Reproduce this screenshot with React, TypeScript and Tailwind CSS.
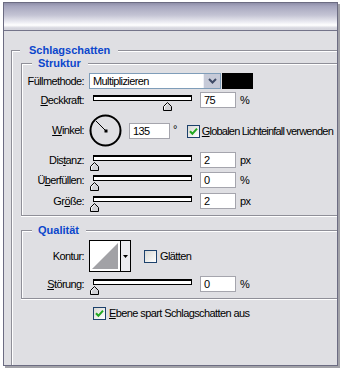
import React from "react";

const TXT = "font-['Liberation_Sans',Arial,sans-serif] text-[11px] tracking-[-0.6px] text-black";

function Check({ checked }: { checked: boolean }) {
  return (
    <div className="w-[13px] h-[13px] shrink-0 border border-[#1c416c] bg-[linear-gradient(135deg,#d8d8d4,#ffffff)] flex items-center justify-center">
      {checked && (
        <svg width="9" height="9" viewBox="0 0 9 9">
          <path d="M1 4.2 L3.4 6.8 L8 1.6" fill="none" stroke="#21a821" strokeWidth="2" />
        </svg>
      )}
    </div>
  );
}

function NumField({ value, w = "w-[36px]" }: { value: string; w?: string }) {
  return (
    <div className={`${w} h-[16px] shrink-0 border border-[#a5a5ad] bg-white pl-[3px] flex items-center ${TXT}`}>
      {value}
    </div>
  );
}

function Slider({ value }: { value: number }) {
  return (
    <div className="relative w-[111px] h-[16px] shrink-0">
      <div className="ml-[4px] mt-[6px] w-[99px] h-[6px] border border-t-2 border-black bg-white" />
      <svg
        className="absolute top-[7px]"
        style={{ left: Math.round(1 + value * 97) }}
        width="10"
        height="9"
        viewBox="0 0 10 9"
      >
        <path d="M4.5 0.5 L8.5 4.5 L8.5 8.5 L0.5 8.5 L0.5 4.5 Z" fill="#d2d2d6" stroke="#000" />
        <path d="M4.5 1.8 L1.5 4.8 L1.5 7.5" fill="none" stroke="#fff" />
      </svg>
    </div>
  );
}

function Label({ children }: { children: React.ReactNode }) {
  return <div className={`w-[62px] shrink-0 text-right ${TXT}`}>{children}</div>;
}

function Legend({ children, className }: { children: React.ReactNode; className: string }) {
  return (
    <div
      className={`absolute top-[-8px] bg-[#dfdfe3] font-['Liberation_Sans',Arial,sans-serif] text-[11px] font-bold leading-[14px] text-[#0b46cc] ${className}`}
    >
      {children}
    </div>
  );
}

export default function App() {
  return (
    <div className="w-[341px] h-[368px] bg-white overflow-hidden pt-[2px] pl-[3px]">
      <div className="w-[335px] h-[364px] border border-[#6c6c82] shadow-[2px_2px_0_#a2a2a8] flex flex-col">
        {/* title band */}
        <div className="h-[28px] shrink-0 border-b border-[#74748a] bg-[linear-gradient(to_bottom,#8e8ea8_0%,#a6a6be_12%,#c4c4d4_45%,#eeeef4_72%,#ffffff_82%,#d8d8e0_92%,#d4d4dc_100%)]" />

        <div className="flex-1 bg-[#dfdfe3] overflow-hidden">
          {/* Schlagschatten */}
          <div className="relative ml-[7px] mt-[19px] w-[340px] h-[330px] border-l border-t border-[#8f8f98] shadow-[inset_1px_1px_0_#fff]">
            <Legend className="left-[8px] pl-[9px] pr-[8px]">Schlagschatten</Legend>

            {/* Struktur */}
            <div className="relative ml-[9px] mt-[12px] w-[330px] border-l border-t border-b border-[#8f8f98] shadow-[inset_1px_1px_0_#fff,0_1px_0_#fff] pb-[6px]">
              <Legend className="left-[10px] pl-[6px] pr-[7px]">Struktur</Legend>

              <div className="mt-[9px] h-[16px] flex items-center">
                <Label>Füllmethode:</Label>
                <div className="ml-[5px] w-[132px] h-[16px] border border-[#7f9db9] bg-white flex">
                  <div className={`flex-1 pl-[3px] flex items-center ${TXT}`}>Multiplizieren</div>
                  <div className="w-[17px] h-full bg-[#c6cad8] border-l border-[#eef0f6] flex items-center justify-center">
                    <svg width="9" height="6" viewBox="0 0 9 6">
                      <path d="M1 1 L4.5 4.5 L8 1" fill="none" stroke="#3e4a66" strokeWidth="2" />
                    </svg>
                  </div>
                </div>
                <div className="ml-[1px] w-[31px] h-[16px] bg-black" />
              </div>

              <div className="mt-[3px] h-[16px] flex items-center">
                <Label>
                  <u>D</u>eckkraft:
                </Label>
                <div className="ml-[5px]">
                  <Slider value={0.75} />
                </div>
                <NumField value="75" />
                <span className={`ml-[4px] ${TXT}`}>%</span>
              </div>

              <div className="mt-[6px] h-[32px] flex items-center">
                <Label>
                  <u>W</u>inkel:
                </Label>
                <svg className="ml-[5px] shrink-0" width="33" height="33" viewBox="0 0 33 33">
                  <circle cx="16.5" cy="16.5" r="15" fill="none" stroke="#000" strokeWidth="2" />
                  <path d="M7 7 L16.5 16.5" stroke="#000" strokeWidth="1" />
                  <rect x="15.5" y="15.5" width="3" height="3" fill="#000" />
                </svg>
                <div className="ml-[7px] mt-[2px]">
                  <NumField value="135" w="w-[41px]" />
                </div>
                <span className={`ml-[3px] self-start mt-[7px] text-[9px] ${TXT}`}>°</span>
                <div className="ml-[10px] mt-[2px]">
                  <Check checked />
                </div>
                <span className="ml-[2px] mt-[2px] whitespace-nowrap font-['Liberation_Sans',Arial,sans-serif] text-[11px] tracking-[-0.8px] text-black">
                  <u>G</u>lobalen Lichteinfall verwenden
                </span>
              </div>

              <div className="mt-[6px] h-[16px] flex items-center">
                <Label>
                  Dis<u>t</u>anz:
                </Label>
                <div className="ml-[5px]">
                  <Slider value={0} />
                </div>
                <NumField value="2" />
                <span className={`ml-[4px] ${TXT}`}>px</span>
              </div>

              <div className="mt-[4px] h-[16px] flex items-center">
                <Label>
                  Ü<u>b</u>erfüllen:
                </Label>
                <div className="ml-[5px]">
                  <Slider value={0} />
                </div>
                <NumField value="0" />
                <span className={`ml-[4px] ${TXT}`}>%</span>
              </div>

              <div className="mt-[5px] h-[16px] flex items-center">
                <Label>
                  Gr<u>ö</u>ße:
                </Label>
                <div className="ml-[5px]">
                  <Slider value={0} />
                </div>
                <NumField value="2" />
                <span className={`ml-[4px] ${TXT}`}>px</span>
              </div>
            </div>

            {/* Qualität */}
            <div className="relative ml-[9px] mt-[14px] w-[330px] border-l border-t border-b border-[#8f8f98] shadow-[inset_1px_1px_0_#fff,0_1px_0_#fff] pb-[6px]">
              <Legend className="left-[10px] pl-[6px] pr-[7px]">Qualität</Legend>

              <div className="mt-[9px] h-[32px] flex items-center">
                <Label>Kontur:</Label>
                <div className="ml-[5px] w-[42px] h-[32px] border border-black bg-white flex">
                  <div className="w-[31px] h-full border-r border-black p-[2px]">
                    <svg width="26" height="26" viewBox="0 0 26 26" className="block">
                      <rect width="26" height="26" fill="#fff" />
                      <path d="M0 26 L26 0 L26 26 Z" fill="#a2a2a6" />
                    </svg>
                  </div>
                  <div className="flex-1 bg-[#ececf0] flex items-center justify-center">
                    <svg width="5" height="3" viewBox="0 0 5 3">
                      <path d="M0 0 L5 0 L2.5 3 Z" fill="#000" />
                    </svg>
                  </div>
                </div>
                <div className="ml-[13px]">
                  <Check checked={false} />
                </div>
                <span className={`ml-[3px] ${TXT}`}>Glätten</span>
              </div>

              <div className="mt-[4px] h-[16px] flex items-center">
                <Label>
                  <u>S</u>törung:
                </Label>
                <div className="ml-[5px]">
                  <Slider value={0} />
                </div>
                <NumField value="0" />
                <span className={`ml-[4px] ${TXT}`}>%</span>
              </div>
            </div>

            <div className="mt-[6px] ml-[81px] flex items-center">
              <Check checked />
              <span className={`ml-[3px] ${TXT}`}>
                <u>E</u>bene spart Schlagschatten aus
              </span>
            </div>
          </div>
        </div>
      </div>
    </div>
  );
}
